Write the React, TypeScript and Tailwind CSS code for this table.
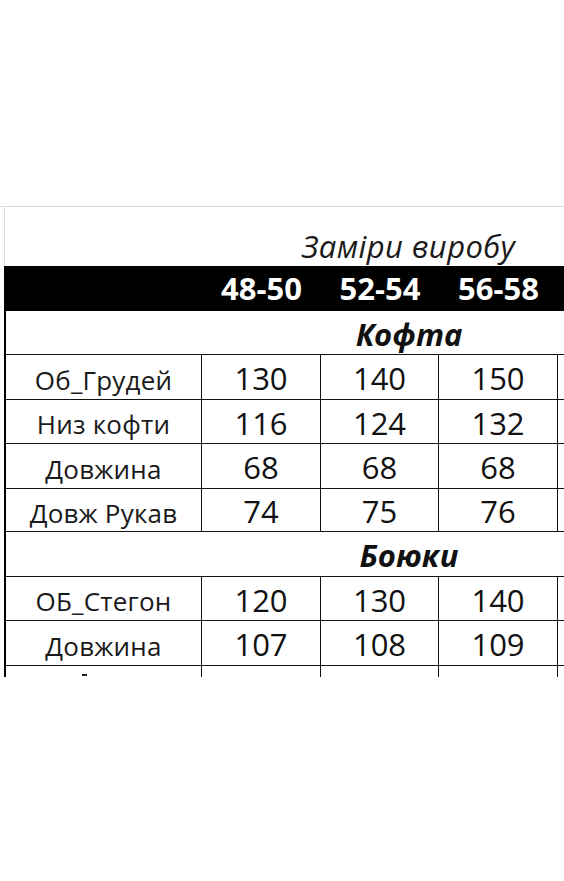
const sizes = ["48-50", "52-54", "56-58"];

const kofta = [
  ["Об_Грудей", "130", "140", "150"],
  ["Низ кофти", "116", "124", "132"],
  ["Довжина", "68", "68", "68"],
  ["Довж Рукав", "74", "75", "76"],
];

const bryuky = [
  ["ОБ_Стегон", "120", "130", "140"],
  ["Довжина", "107", "108", "109"],
];

const koftaHeights = ["h-[45px]", "h-[44px]", "h-[45px]", "h-[43px]"];
const bryukyHeights = ["h-[44px]", "h-[45px]"];

const font = { fontFamily: '"Open Sans", "Noto Sans", sans-serif' };

const DataRow = ({ row, h }: { row: string[]; h: string }) => (
  <div className={`flex ${h} border-b border-[#111]`}>
    <div className="w-[196px] border-r border-[#111] flex items-center justify-center text-[26px] text-[#1a1a1a] pt-[6px] tracking-[0.2px]">
      {row[0]}
    </div>
    <div className="w-[119px] border-r border-[#111] flex items-center justify-center text-[31px] text-[#111] pt-[3px]">
      {row[1]}
    </div>
    <div className="w-[118px] border-r border-[#111] flex items-center justify-center text-[31px] text-[#111] pt-[3px]">
      {row[2]}
    </div>
    <div className="w-[119px] border-r border-[#111] flex items-center justify-center text-[31px] text-[#111] pt-[3px]">
      {row[3]}
    </div>
    <div className="flex-1" />
  </div>
);

const SectionRow = ({ title, h }: { title: string; h: string }) => (
  <div className={`flex ${h} border-b border-[#111] items-center pl-[248px]`}>
    <div className="flex-1 text-center text-[31px] font-bold italic text-[#111] pt-[3px]">{title}</div>
  </div>
);

export default function App() {
  return (
    <div className="w-[564px] h-[881px] bg-white overflow-hidden" style={font}>
      <div className="h-[206px]" />
      <div className="h-px bg-[#d9d9d9]" />

      {/* caption row */}
      <div className="flex h-[59px] ml-[4px] border-l border-[#dcdcdc]">
        <div className="flex-1 flex items-end justify-center pl-[248px]">
          <span className="text-[31px] leading-[40px] italic text-[#1a1a1a] tracking-[0.4px]">Заміри виробу</span>
        </div>
      </div>

      {/* sizes band */}
      <div className="flex h-[45px] ml-[4px] bg-black text-white font-bold text-[31px] items-center">
        <div className="w-[198px]" />
        <div className="w-[119px] text-center">{sizes[0]}</div>
        <div className="w-[118px] text-center">{sizes[1]}</div>
        <div className="w-[119px] text-center">{sizes[2]}</div>
      </div>

      {/* table */}
      <div className="ml-[4px] border-l-2 border-black h-[366px] overflow-hidden">
        <SectionRow title="Кофта" h="h-[44px]" />
        {kofta.map((r, i) => (
          <DataRow key={i} row={r} h={koftaHeights[i]} />
        ))}
        <SectionRow title="Боюки" h="h-[45px]" />
        {bryuky.map((r, i) => (
          <DataRow key={i} row={r} h={bryukyHeights[i]} />
        ))}
        <div className="flex h-[20px]">
          <div className="w-[196px] border-r border-[#111] pl-[76px] pt-[8px]">
            <div className="w-[5px] h-[2px] bg-[#222]" />
          </div>
          <div className="w-[119px] border-r border-[#111]" />
          <div className="w-[118px] border-r border-[#111]" />
          <div className="w-[119px] border-r border-[#111]" />
        </div>
      </div>
    </div>
  );
}
